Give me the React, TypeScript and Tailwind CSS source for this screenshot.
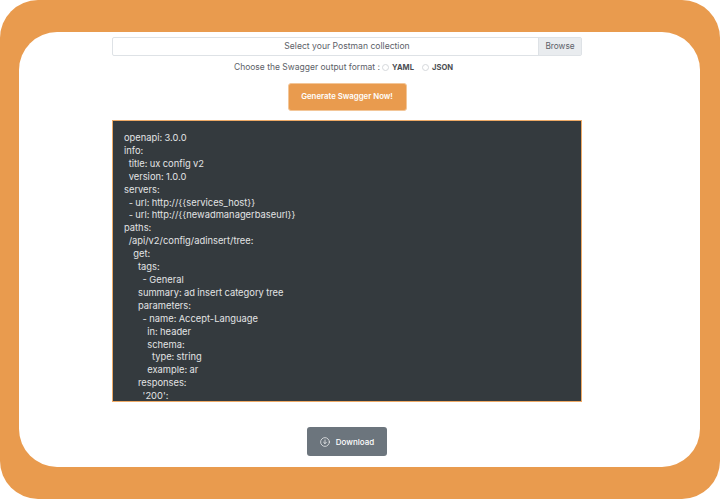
import React from 'react';

const yaml = `openapi: 3.0.0
info:
  title: ux config v2
  version: 1.0.0
servers:
  - url: http://{{services_host}}
  - url: http://{{newadmanagerbaseurl}}
paths:
  /api/v2/config/adinsert/tree:
    get:
      tags:
        - General
      summary: ad insert category tree
      parameters:
        - name: Accept-Language
          in: header
          schema:
            type: string
          example: ar
      responses:
        '200':`;

const App: React.FC = () => {
  return (
    <div className="w-[720px] h-[499px] bg-white overflow-hidden font-['Inter','Liberation_Sans',sans-serif]">
      <div className="h-full bg-[#e99b4e] rounded-[38px] pt-[32px] pb-[32px] pl-[19px] pr-[20px]">
        <div className="h-full bg-white rounded-[38px] flex flex-col items-center pt-[5px] pr-[25px]">
          {/* file picker */}
          <div className="w-[470px] h-[19px] flex border border-[#dee2e6] rounded-[2px] text-[8.6px] text-[#5c6168]">
            <div className="flex-1 flex items-center justify-center pl-[43px]">Select your Postman collection</div>
            <div className="w-[43px] bg-[#e9ecef] border-l border-[#dee2e6] flex items-center justify-center text-[8.3px]">Browse</div>
          </div>

          {/* output format */}
          <div className="mt-[5px] h-[13px] pr-[7px] flex items-center text-[8.5px] text-[#5c6168]">
            <span>Choose the Swagger output format :</span>
            <span className="ml-[2px] w-[7px] h-[7px] rounded-full border border-[#d5d8db]" />
            <span className="ml-[3px] font-bold text-[#4a4d52] text-[7.6px]">YAML</span>
            <span className="ml-[8px] w-[7px] h-[7px] rounded-full border border-[#d5d8db]" />
            <span className="ml-[3px] font-bold text-[#4a4d52] text-[7.6px]">JSON</span>
          </div>

          <button className="mt-[9px] w-[119px] h-[28px] bg-[#e99b4e] border border-[#f3c698] rounded-[3px] text-white text-[7.8px] font-semibold flex items-center justify-center">
            Generate Swagger Now!
          </button>

          {/* output */}
          <div className="mt-[9px] w-[470px] h-[282px] bg-[#343a3e] border border-[#eeaa66] overflow-hidden pl-[11px] pt-[11px]">
            <pre className="font-['Inter','Liberation_Sans',sans-serif] text-[9.35px] leading-[12.9px] text-[#e3e4e5] whitespace-pre [word-spacing:-0.3px]">{yaml}</pre>
          </div>

          <button className="mt-[25px] w-[80px] h-[29px] bg-[#6c757d] rounded-[3px] text-white text-[8px] font-medium flex items-center justify-center gap-[6px]">
            <svg width="10" height="10" viewBox="0 0 24 24" fill="none" stroke="currentColor" strokeWidth="1.6" strokeLinecap="round" strokeLinejoin="round">
              <circle cx="12" cy="12" r="10.5" />
              <path d="M12 7v9M8.5 12.5 12 16l3.5-3.5" />
            </svg>
            Download
          </button>
        </div>
      </div>
    </div>
  );
};

export default App;
